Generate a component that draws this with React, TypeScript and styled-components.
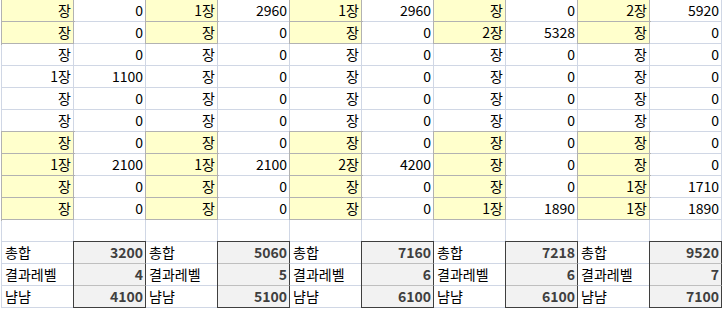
import styled, { createGlobalStyle, css } from "styled-components";

const colors = {
  grid: "#d0d7e5",
  yellow: "#ffffcc",
  yellowLine: "#b2b2b2",
  outputBg: "#f2f2f2",
  outputLine: "#3f3f3f",
  outputInner: "#bfbfbf",
  text: "#000000",
  outputText: "#3f3f3f",
};

const GlobalStyle = createGlobalStyle`
  body {
    margin: 0;
    background: #ffffff;
    font-family: "Noto Sans CJK KR", "Noto Sans", sans-serif;
  }
`;

const Sheet = styled.div`
  display: grid;
  grid-template-columns: repeat(10, 72px);
  grid-auto-rows: 22px;
  margin-left: 1px;
  border-left: 1px solid ${colors.grid};
  width: max-content;
`;

type Fill = "none" | "yellow" | "output";
type Edge = "top" | "mid" | "bottom";

const Cell = styled.div<{ $fill?: Fill; $align?: "left" | "right"; $edge?: Edge }>`
  box-sizing: border-box;
  display: flex;
  align-items: center;
  justify-content: ${(p) => (p.$align === "left" ? "flex-start" : "flex-end")};
  padding: 0 2px 0 3px;
  background: #ffffff;
  border-right: 1px solid ${colors.grid};
  border-bottom: 1px solid ${colors.grid};
  font-size: 14px;
  line-height: 21px;
  color: ${colors.text};
  white-space: nowrap;

  ${(p) =>
    p.$fill === "yellow" &&
    css`
      background: ${colors.yellow};
      border-color: ${colors.yellowLine};
      box-shadow: 0 0 0 1px ${colors.yellowLine};
    `}

  ${(p) =>
    p.$fill === "output" &&
    css`
      background: ${colors.outputBg};
      border-right-color: ${colors.outputLine};
      border-bottom-color: ${p.$edge === "bottom" ? colors.outputLine : colors.outputInner};
      font-weight: 700;
      color: ${colors.outputText};
      box-shadow: ${p.$edge === "top"
        ? `-1px 0 0 0 ${colors.outputLine}, 0 -1px 0 0 ${colors.outputLine}, -1px -1px 0 0 ${colors.outputLine}`
        : `-1px 0 0 0 ${colors.outputLine}`};
    `}
`;

const data: string[][] = [
  ["장", "0", "1장", "2960", "1장", "2960", "장", "0", "2장", "5920"],
  ["장", "0", "장", "0", "장", "0", "2장", "5328", "장", "0"],
  ["장", "0", "장", "0", "장", "0", "장", "0", "장", "0"],
  ["1장", "1100", "장", "0", "장", "0", "장", "0", "장", "0"],
  ["장", "0", "장", "0", "장", "0", "장", "0", "장", "0"],
  ["장", "0", "장", "0", "장", "0", "장", "0", "장", "0"],
  ["장", "0", "장", "0", "장", "0", "장", "0", "장", "0"],
  ["1장", "2100", "1장", "2100", "2장", "4200", "장", "0", "장", "0"],
  ["장", "0", "장", "0", "장", "0", "장", "0", "1장", "1710"],
  ["장", "0", "장", "0", "장", "0", "1장", "1890", "1장", "1890"],
];

const yellowRows = [0, 1, 6, 7, 8, 9];

const summaryLabels = ["총합", "결과레벨", "냠냠"];
const summaryValues: string[][] = [
  ["3200", "5060", "7160", "7218", "9520"],
  ["4", "5", "6", "6", "7"],
  ["4100", "5100", "6100", "6100", "7100"],
];

const edgeOf = (i: number): Edge => (i === 0 ? "top" : i === 2 ? "bottom" : "mid");

export default function App() {
  return (
    <>
      <GlobalStyle />
      <Sheet>
        {data.map((row, r) =>
          row.map((value, c) => (
            <Cell
              key={`${r}-${c}`}
              $fill={c % 2 === 0 && yellowRows.includes(r) ? "yellow" : "none"}
            >
              {value}
            </Cell>
          ))
        )}

        {Array.from({ length: 10 }, (_, c) => (
          <Cell key={`blank-${c}`} />
        ))}

        {summaryValues.map((values, r) =>
          values.flatMap((value, g) => [
            <Cell key={`l-${r}-${g}`} $align="left">
              {summaryLabels[r]}
            </Cell>,
            <Cell key={`v-${r}-${g}`} $fill="output" $edge={edgeOf(r)}>
              {value}
            </Cell>,
          ])
        )}
      </Sheet>
    </>
  );
}
